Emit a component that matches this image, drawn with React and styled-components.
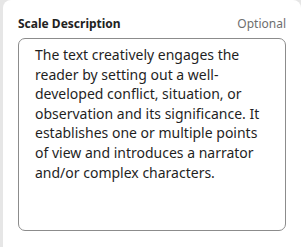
import React from 'react';
import styled, {createGlobalStyle} from 'styled-components';

const GlobalStyle = createGlobalStyle`
  html, body {
    margin: 0;
    padding: 0;
    background: #e6e6e6;
    font-family: "Noto Sans", "Open Sans", sans-serif;
  }
`;

const Card = styled.div`
  margin-left: 3px;
  height: 247px;
  box-sizing: border-box;
  background: #ffffff;
  border-radius: 8px 8px 0 0;
  padding: 15px 15px 0 15px;
`;

const LabelRow = styled.div`
  display: flex;
  justify-content: space-between;
  align-items: baseline;
  font-size: 12px;
  line-height: 18px;
  margin-bottom: 5px;
`;

const Label = styled.label`
  font-weight: 700;
  color: #222222;
`;

const Hint = styled.span`
  color: #6e6e6e;
`;

const TextArea = styled.textarea`
  display: block;
  width: 100%;
  height: 193px;
  box-sizing: border-box;
  border: 1px solid #8c8c8c;
  border-radius: 7px;
  padding: 6px 16px;
  resize: none;
  font-family: "Noto Sans", "Open Sans", sans-serif;
  font-size: 14px;
  line-height: 19.6px;
  color: #1f1f1f;
  background: #ffffff;
  outline: none;
`;

const App = () => {
  return (
    <>
      <GlobalStyle />
      <Card>
        <LabelRow>
          <Label htmlFor="scale-desc">Scale Description</Label>
          <Hint>Optional</Hint>
        </LabelRow>
        <TextArea
          id="scale-desc"
          defaultValue="The text creatively engages the reader by setting out a well-developed conflict, situation, or observation and its significance. It establishes one or multiple points of view and introduces a narrator and/or complex characters."
        />
      </Card>
    </>
  );
};

export default App;
